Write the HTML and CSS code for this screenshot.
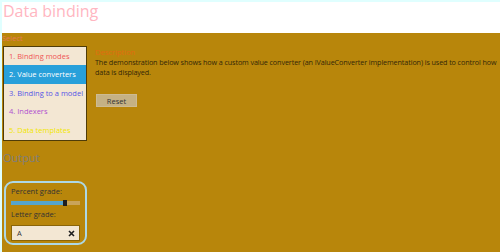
FILE: index.html
```html
<!DOCTYPE html>
<html lang="en">
<head>
    <meta charset="UTF-8">
    <title>Data binding</title>
    <link rel="stylesheet" href="styles.css">
</head>
<body>
    <header class="header">
        <h1>Data binding</h1>
    </header>
    <div class="main">
        <div class="side">
            <div class="select-label">Select</div>
            <ul class="scenarios">
                <li class="s1">1. Binding modes</li>
                <li class="s2 selected">2. Value converters</li>
                <li class="s3">3. Binding to a model</li>
                <li class="s4">4. Indexers</li>
                <li class="s5">5. Data templates</li>
            </ul>
            <h2 class="output-title">Output</h2>
            <div class="output">
                <div class="field-label">Percent grade:</div>
                <div class="slider">
                    <div class="fill"></div>
                    <div class="thumb"></div>
                    <div class="rest"></div>
                </div>
                <div class="field-label">Letter grade:</div>
                <div class="textbox">
                    <span>A</span>
                    <svg class="clear" width="7" height="7" viewBox="0 0 7 7">
                        <path d="M1 1 L6 6 M6 1 L1 6" stroke="#1e1e1e" stroke-width="1.6" fill="none"/>
                    </svg>
                </div>
            </div>
        </div>
        <div class="content">
            <div class="desc-title">Description</div>
            <p class="desc">The demonstration below shows how a custom value converter (an IValueConverter implementation) is used to control how data is displayed.</p>
            <button class="reset">Reset</button>
        </div>
    </div>
</body>
</html>
```

FILE: styles.css
```css
* {
    box-sizing: border-box;
}

html {
    background: #e0ffff;
}

body {
    margin: 2px 0 0 2px;
    height: 250px;
    font-family: "Open Sans", "Noto Sans", sans-serif;
    font-size: 7.5px;
    display: flex;
    flex-direction: column;
}

.header {
    background: white;
    height: 31px;
}

.header h1 {
    margin: 0;
    font-weight: normal;
    font-size: 16px;
    line-height: 19px;
    color: #ffb6c1;
    padding-left: 1px;
}

.main {
    flex: 1;
    background: #b8860b;
    display: flex;
}

.side {
    width: 85px;
    flex-shrink: 0;
}

.select-label {
    color: #e47a52;
    line-height: 10px;
}

.scenarios {
    list-style: none;
    margin: 3px 0 0 1px;
    padding: 0;
    border: 1.5px solid #4f3c08;
    background: #f3e7d3;
    height: 95px;
}

.scenarios li {
    height: 18.4px;
    line-height: 18.4px;
    padding-left: 5px;
    white-space: nowrap;
}

.s1 { color: #ef5555; }
.s2 { color: white; }
.s3 { color: #5555e6; }
.s4 { color: #b050d0; }
.s5 { color: #f2e600; }

.scenarios .selected {
    background: #28a0da;
}

.output-title {
    margin: 10px 0 0 1px;
    font-weight: normal;
    font-size: 11px;
    line-height: 14px;
    color: #7d7d7d;
}

.output {
    margin: 16px 0 0 2px;
    width: 83px;
    height: 64px;
    border: 2px solid #add8e6;
    border-radius: 9px;
    padding: 3px 5px 0 5px;
}

.field-label {
    color: #333;
    line-height: 10px;
}

.slider {
    display: flex;
    align-items: center;
    height: 6px;
    margin: 4px 0 3px;
}

.fill {
    width: 52px;
    height: 4px;
    background: #56a5cc;
}

.thumb {
    width: 4px;
    height: 6px;
    background: #1e1e1e;
}

.rest {
    flex: 1;
    height: 4px;
    background: #c9a45a;
}

.textbox {
    margin-top: 6px;
    height: 16px;
    background: #f3e7d3;
    border: 1px solid #8a6508;
    display: flex;
    align-items: center;
    justify-content: space-between;
    padding: 0 4px 0 5px;
    color: #333;
}

.content {
    flex: 1;
    padding-left: 8px;
    padding-top: 14px;
}

.desc-title {
    color: #e06c10;
    line-height: 10px;
}

.desc {
    margin: 0;
    color: #332708;
    font-size: 7.2px;
    letter-spacing: -0.1px;
    line-height: 10px;
}

.reset {
    display: block;
    margin-top: 17px;
    margin-left: 1px;
    width: 41px;
    height: 13px;
    padding: 0;
    border: 1px solid #cdbb93;
    background: #c5b184;
    color: #333;
    font-family: inherit;
    font-size: 7.5px;
}
```
